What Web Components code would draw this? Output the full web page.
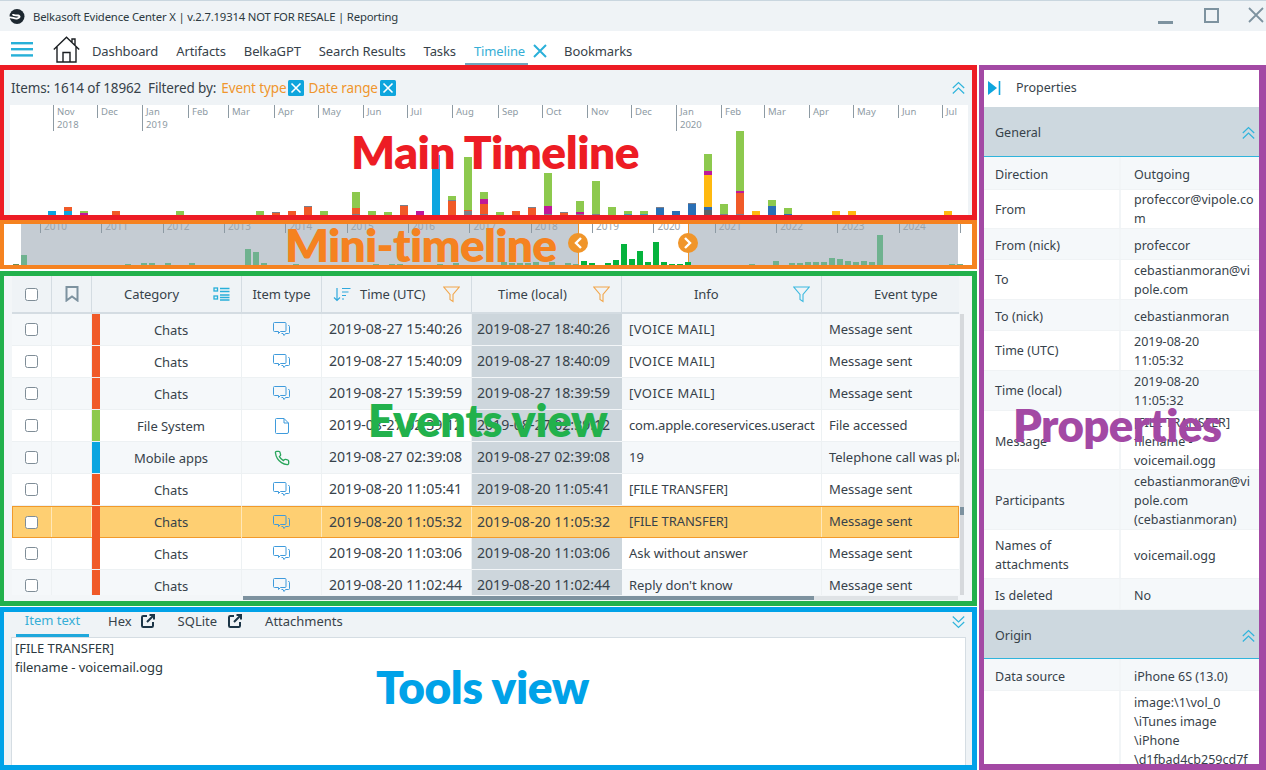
<!DOCTYPE html>
<html><head><meta charset="utf-8"><title>Belkasoft Evidence Center X</title>
<style>
html,body{margin:0;padding:0;background:#fff;height:770px;overflow:hidden}
body{font:13px "Noto Sans","Open Sans",sans-serif;color:#37424a}
</style></head><body>
<x-app></x-app>
<script>
const ICONS={
 chat:'<svg width="17" height="15" viewBox="0 0 17 15" fill="none" stroke="#3f9bdc"><path d="M1.5.5h10.5a1 1 0 0 1 1 1v7a1 1 0 0 1-1 1H7.5l-2 2v-2H1.500a1 1 0 0 1-1-1v-7a1 1 0 0 1 1-1z"/><path d="M15 3.500h.5a1 1 0 0 1 1 1v6a1 1 0 0 1-1 1h-3l-1.500 2-1-2H8.500"/></svg>',
 file:'<svg width="14" height="16" viewBox="0 0 14 16" fill="none" stroke="#3f9bdc"><path d="M1.500.5h7.500l4.500 4.500v9a1.500 1.500 0 0 1-1.500 1.500H1.500A1 1 0 0 1 .5 14.500v-13a1 1 0 0 1 1-1z"/><path d="M9 .5v4.500h4.500"/></svg>',
 phone:'<svg width="16" height="16" viewBox="0 0 24 24" fill="none" stroke="#2aa65c" stroke-width="2"><path d="M22 16.920v3a2 2 0 0 1-2.180 2 19.790 19.790 0 0 1-8.630-3.070 19.500 19.500 0 0 1-6-6 19.790 19.790 0 0 1-3.070-8.670A2 2 0 0 1 4.110 2h3a2 2 0 0 1 2 1.720 12.840 12.840 0 0 0 .7 2.810 2 2 0 0 1-.45 2.110L8.090 9.910a16 16 0 0 0 6 6l1.270-1.270a2 2 0 0 1 2.110-.45 12.840 12.840 0 0 0 2.810.7A2 2 0 0 1 22 16.920z"/></svg>',
 up:'<svg width="13" height="14" viewBox="0 0 13 14" fill="none" stroke="#2fb4dc" stroke-width="1.200"><path d="M.8 7 6.500 1.500 12.200 7M.8 12.500 6.500 7 12.200 12.500"/></svg>',
 down:'<svg width="13" height="14" viewBox="0 0 13 14" fill="none" stroke="#2fb4dc" stroke-width="1.200"><path d="M.8 1.500 6.500 7 12.200 1.500M.8 7 6.500 12.500 12.200 7"/></svg>',
 funnelO:'<svg width="17" height="17" viewBox="0 0 17 17" fill="none" stroke="#f2a64b" stroke-width="1.100"><path d="M.8 1h15.400L10 8.500v7l-3-2V8.500z"/></svg>',
 funnelB:'<svg width="17" height="17" viewBox="0 0 17 17" fill="none" stroke="#3cb9e0" stroke-width="1.100"><path d="M.8 1h15.400L10 8.500v7l-3-2V8.500z"/></svg>',
 bookmark:'<svg width="14" height="16" viewBox="0 0 14 16" fill="none" stroke="#7d929f" stroke-width="2"><path d="M1.500 1h11v13.500L7 10.500 1.500 14.500z"/></svg>',
 list:'<svg width="17" height="14" viewBox="0 0 17 14" fill="none" stroke="#27afd9" stroke-width="1.300"><rect x="1" y="1" width="3.500" height="3"/><rect x="1" y="9" width="3.500" height="3"/><path d="M7 1.500h9.500M7 4.500h9.500M7 8h9.500M7 10.500h9.500M7 13h9.500"/></svg>',
 sort:'<svg width="18" height="15" viewBox="0 0 18 15" fill="none" stroke="#2fa8dc" stroke-width="1.200"><path d="M4 1v12.500M1 10.500l3 3 3-3M9 1.500h8.500M9 5h6.500M9 8.500h4M9 12h2"/></svg>',
 ext:'<svg width="14" height="14" viewBox="0 0 14 14" fill="none" stroke="#1c3547" stroke-width="2"><path d="M6 2H2.200A1.200 1.200 0 0 0 1 3.200v8.600A1.200 1.200 0 0 0 2.200 13h8.600a1.200 1.200 0 0 0 1.200-1.200V8M6 8l7-7M8.500 1H13v4.500"/></svg>',
 xBlue:'<svg width="14" height="14" viewBox="0 0 14 14" fill="none" stroke="#2ab0d9" stroke-width="2"><path d="M1 1l12 12M13 1 1 13"/></svg>',
 chip:'<svg width="16" height="16" viewBox="0 0 16 16"><rect width="16" height="16" rx="1.500" fill="#0ea5dd"/><path d="M3.500 3.500l9 9M12.500 3.500l-9 9" stroke="#fff" stroke-width="1.600" fill="none"/></svg>',
 panel:'<svg width="13" height="14" viewBox="0 0 13 14"><path d="M0 0 9 7 0 14z" fill="#0ea5dd"/><path d="M11.500 0v14" stroke="#0ea5dd" stroke-width="1.600"/></svg>',
 logo:'<svg width="16" height="15" viewBox="0 0 16 15"><circle cx="8" cy="7.500" r="7.500" fill="#1d2830"/><path d="M0 8.500c3-1 5 1.500 8 1s3.500-2.500 1-3-5 .5-5-1.500" fill="none" stroke="#fff" stroke-width="1.800"/></svg>',
 home:'<svg width="27" height="27" viewBox="0 0 27 27" fill="none" stroke="#1b1f22" stroke-width="1.400"><path d="M.8 13.500 13.500 1.200 26.200 13.500M4 11v15h19V11M10 26V16.500h7V26M19 7V3h3v7"/></svg>',
 burger:'<svg width="22" height="15" viewBox="0 0 22 15" fill="#27b0d8"><rect width="22" height="2.400"/><rect y="6" width="22" height="2.400"/><rect y="12.200" width="22" height="2.400"/></svg>',
 min:'<svg width="15" height="3"><rect width="15" height="3" fill="#7d929f"/></svg>',
 max:'<svg width="15" height="15" fill="none" stroke="#7d929f" stroke-width="2"><rect x="1" y="1" width="13" height="13"/></svg>',
 close:'<svg width="16" height="16" fill="none" stroke="#7d929f" stroke-width="1.800"><path d="M1 1l14 14M15 1 1 15"/></svg>',
 left:'<svg width="10" height="12" viewBox="0 0 10 12" fill="none" stroke="#fff" stroke-width="2.400"><path d="M8 1 3 6l5 5"/></svg>',
 right:'<svg width="10" height="12" viewBox="0 0 10 12" fill="none" stroke="#fff" stroke-width="2.400"><path d="M2 1l5 5-5 5"/></svg>'
};
function define(name,css,render){
 customElements.define(name,class extends HTMLElement{
  constructor(){super();this.attachShadow({mode:'open'});}
  connectedCallback(){this.shadowRoot.innerHTML='<style>'+css+'</style>'+render(this);}
 });
}
define('x-icon',':host{display:inline-flex;flex:none;line-height:0}',el=>ICONS[el.getAttribute('name')]);
define('x-check',':host{display:block;flex:none;width:11px;height:11px;border:1px solid #7f8d97;border-radius:2.500px;background:#fff}',()=>'');

define('x-titlebar',`:host{display:flex;align-items:center;height:30px;background:#eff3f6;border-top:1px solid #c9d6df;padding-left:9px;font-size:11.300px;color:#2c3940;letter-spacing:-.17px}
 .t{margin-left:8px;flex:1;white-space:nowrap}
 .a{margin-right:31px;margin-top:12px}.b{margin-right:29px;margin-top:-2px}.d{margin-right:2px;margin-top:-2px}`,
 ()=>`<x-icon name="logo"></x-icon><span class="t">Belkasoft Evidence Center X | v.2.7.19314 NOT FOR RESALE | Reporting</span>
 <x-icon class="a" name="min"></x-icon><x-icon class="b" name="max"></x-icon><x-icon class="d" name="close"></x-icon>`);

define('x-navbar',`:host{display:flex;align-items:center;height:34px;background:#fff;padding-left:11px;font-size:13px;color:#37424a;letter-spacing:-.12px;box-sizing:border-box}
 .tabs{display:flex;align-self:stretch;align-items:center;margin-left:3px}
 .tab{padding:6px 9px 0;height:100%;display:flex;align-items:center;white-space:nowrap;box-sizing:border-box}
 .on{color:#35aed6;border-bottom:2px solid #6fa5bd;padding:8px 3px 0 9px}
 .x{margin:6px 8px 0 5px}
 .h{margin-left:20px;margin-top:3px}.bg{margin-top:3px}`,
 ()=>`<x-icon class="bg" name="burger"></x-icon><x-icon class="h" name="home"></x-icon><div class="tabs">
 ${['Dashboard','Artifacts','BelkaGPT','Search Results','Tasks'].map(t=>`<div class="tab">${t}</div>`).join('')}
 <div class="tab on">Timeline</div><x-icon class="x" name="xBlue"></x-icon><div class="tab">Bookmarks</div></div>`);

define('x-frame',`:host{display:block;position:relative;box-sizing:border-box;border-style:solid;border-color:var(--c);border-width:var(--bw,5px 5px 5px 4px)}
 .l{position:absolute;font:800 var(--fs,46px)/1 Lato,"Open Sans",sans-serif;letter-spacing:var(--ls,0);color:var(--c);white-space:nowrap;pointer-events:none;z-index:5}`,
 el=>`<slot></slot><div class="l" style="left:${el.getAttribute('lx')}px;top:${el.getAttribute('ly')}px">${el.getAttribute('label')}</div>`);

const MONTHS=[[53,'Nov','2018'],[97,'Dec'],[142,'Jan','2019'],[188,'Feb'],[228,'Mar'],[274,'Apr'],[318,'May'],[363,'Jun'],[407,'Jul'],[452,'Aug'],[498,'Sep'],[542,'Oct'],[587,'Nov'],[631,'Dec'],[676,'Jan','2020'],[721,'Feb'],[764,'Mar'],[809,'Apr'],[853,'May'],[898,'Jun'],[942,'Jul'],[968,'']];
const COL={g:'#8dc94e',r:'#f05a28',b:'#0ba5e0',p:'#c0189a',y:'#ffb90f',d:'#2a6fb5',s:'#7b7f8a',t:'#3aa8b8',k:'#5f6368'};
const BARS={48:'b5',64:'r4 b5',80:'g2 p2 s1',112:'r5',176:'g4 r1',256:'g5',272:'s1 r3',288:'r5',304:'s1 r9',320:'g5',352:'g16 r6 s2',368:'g5',384:'g3 r1',400:'s1 r9 s1',416:'p5',432:'b60 s1',448:'g4 s1 r15',464:'g53 r1 s5',480:'g7 p5 r10 s2',496:'g3 s1',512:'r5',528:'s1 r8',544:'g33 p8 s2',560:'s1 r3',576:'g11 p2 s2',592:'g33 s2',608:'g8 s1',624:'g3 t2',640:'g3 t2',656:'s1 d8',672:'d5',688:'s1 d11 s1',704:'g17 p4 y32 d3 k6',720:'g10 s2',736:'g60 p2 r21 s2',752:'y5',768:'g6 d9 s1',784:'g6 d2',832:'y5',848:'y5',944:'y5'};
define('x-main-timeline',`:host{display:flex;flex-direction:column;height:145px;background:#eff3f6;overflow:hidden}
 .bar{height:35px;flex:none;display:flex;align-items:center;padding-left:7px;font-size:13.500px;letter-spacing:-.12px;color:#37424a;white-space:pre}
 .o{color:#f0962d;margin-left:5px}.o+x-icon{margin-left:2px}.o.f{margin-left:4px}
 .up{margin-left:auto;margin-right:7px;}
 .chart{flex:1;margin:0 4px 0 6px;background:#fff;position:relative;display:flex;flex-direction:column;justify-content:space-between}
 .ticks{display:flex;padding-left:43px}
 .tick{font-size:9.500px;line-height:13px;color:#8d9aa3;flex:none;box-sizing:border-box}
 .tick span{display:block;border-left:1px solid #8d9aa3;padding-left:3px}
 .bars{display:flex;align-items:flex-end;padding-left:38px;margin-bottom:4px}
 .col{width:8px;margin-right:8px;flex:none;display:flex;flex-direction:column}
 .col i{display:block}`,
 ()=>{
  let ticks='';
  for(let i=0;i<MONTHS.length-1;i++){const m=MONTHS[i];ticks+=`<div class="tick" style="width:${MONTHS[i+1][0]-m[0]}px"><span>${m[1]}${m[2]?'<br>'+m[2]:''}</span></div>`;}
  let bars='';
  for(let x=48;x<=944;x+=16){const s=BARS[x];bars+='<div class="col">'+(s?s.split(' ').map(p=>`<i style="background:${COL[p[0]]};height:${p.slice(1)}px"></i>`).join(''):'')+'</div>';}
  return `<div class="bar"><span>Items: 1614 of 18962  Filtered by:</span><span class="o">Event type</span><x-icon name="chip"></x-icon><span class="o f">Date range</span><x-icon name="chip"></x-icon><x-icon class="up" name="up"></x-icon></div>
  <div class="chart"><div class="ticks">${ticks}</div><div class="bars">${bars}</div></div>`;
 });

const MINI={12:1,21:10,125:1,141:2,149:2,165:2,189:2,245:16,253:13,261:2,293:1,373:1,389:1,397:1,437:1,453:2,501:3,509:2,517:2,525:2,533:3,549:3,565:2,573:1,581:4,589:2,605:2,613:5,621:21,629:6,637:14,645:3,653:23,661:3,669:1,677:1,685:3,703:2,711:1,749:1,773:4,789:2,797:2,805:3,813:3,821:3,829:7,837:6,845:4,853:3,861:4,869:3,877:30,949:1,957:1};
define('x-mini-timeline',`:host{display:flex;flex-direction:column;justify-content:space-between;position:relative;height:41px;overflow:hidden;
  background:linear-gradient(to right,#fff 17px,#c5ccd3 17px,#c5ccd3 574px,#f0952a 574px,#f0952a 575px,#fff 575px,#fff 684px,#f0952a 684px,#f0952a 685px,#c5ccd3 685px,#c5ccd3 954px,#fff 954px)}
 .ticks{display:flex;padding-left:36px;margin-top:-4px}
 .tick{flex:none;width:61.350px;box-sizing:border-box;font-size:10px;line-height:13px;color:#9aa5ad;border-left:1px solid #8d9aa3;padding-left:3px}
 .bars{display:flex;align-items:flex-end;padding-left:9px}
 .b{flex:none;width:6px;margin-right:2px}
 .h{position:absolute;top:9px;width:20px;height:20px;border-radius:50%;background:#f0952a;display:flex;align-items:center;justify-content:center;z-index:6}`,
 ()=>{
  let t='';for(let y=2010;y<=2025;y++)t+=`<div class="tick">${y<2025?y:''}</div>`;
  let b='';for(let x=13;x<=957;x+=8){const k=x==13?12:x;const h=MINI[k]||0;const c=(x>=579&&x<688)?'#05b33d':(x<21?'#6f8f55':'#6fb28f');b+=`<div class="b" style="height:${h}px;background:${c}"></div>`;}
  return `<div class="ticks">${t}</div><div class="bars">${b}</div><div class="h" style="left:564px"><x-icon name="left"></x-icon></div><div class="h" style="left:674px"><x-icon name="right"></x-icon></div>`;
 });

const R=[['r','Chats','chat','2019-08-27 15:40:26','2019-08-27 18:40:26','[VOICE MAIL]','Message sent'],
['r','Chats','chat','2019-08-27 15:40:09','2019-08-27 18:40:09','[VOICE MAIL]','Message sent'],
['r','Chats','chat','2019-08-27 15:39:59','2019-08-27 18:39:59','[VOICE MAIL]','Message sent'],
['g','File System','file','2019-08-27 02:39:12','2019-08-27 02:39:12','com.apple.coreservices.useract','File accessed'],
['b','Mobile apps','phone','2019-08-27 02:39:08','2019-08-27 02:39:08','19','Telephone call was placed'],
['r','Chats','chat','2019-08-20 11:05:41','2019-08-20 11:05:41','[FILE TRANSFER]','Message sent'],
['r','Chats','chat','2019-08-20 11:05:32','2019-08-20 11:05:32','[FILE TRANSFER]','Message sent'],
['r','Chats','chat','2019-08-20 11:03:06','2019-08-20 11:03:06','Ask without answer','Message sent'],
['r','Chats','chat','2019-08-20 11:02:44','2019-08-20 11:02:44',"Reply don't know",'Message sent']];
const infoStyle=s=>s.startsWith('[VOICE')?' style="letter-spacing:.45px"':s.startsWith('com.')?' style="letter-spacing:-.18px"':'';
define('x-events',`:host{display:block;height:325px;background:#f3f6f8;position:relative;overflow:hidden;padding-left:8px;font-size:13px;letter-spacing:-.05px;color:#37424a}
 .wrap{width:947px;height:319px;overflow:hidden}
 .r{display:grid;grid-template-columns:40px 40px 150px 80px 150px 150px 200px 137px;height:32px;box-sizing:border-box;background:#fff}
 .r:nth-child(even){background:#f5f8fa}
 .c{display:flex;align-items:center;min-width:0;white-space:nowrap;overflow:hidden;box-sizing:border-box;border-right:1px solid #edf1f3;border-bottom:1px solid #edf1f3}
 .hd{height:38px;background:#eff3f6!important}
 .hd .c{border-right:1px solid #d4dce2;border-bottom:2px solid #d4dce2;justify-content:center;color:#37424a}
 .ctr{justify-content:center}.p{padding:0 0 2px 7px}
 .tm{font-size:14.100px;letter-spacing:0}
 .cat{position:relative;padding-left:9px}
 .cat i{position:absolute;left:0;top:0;bottom:-1px;width:8px}
 .loc{background:#cdd6dc;border-bottom:1px solid #f3f6f8;padding:0 0 2px 5px;border-right:none}
 .sel{background:#fecf72!important;outline:1px solid #f19a2b;outline-offset:-1px;position:relative}
 .sel .c{border-color:#ffe7b8;border-bottom:none;background:transparent}
 .vs{position:absolute;left:956px;top:38px;width:4px;height:281px;background:#d6d9dc}
 .vs i{display:block;position:absolute;top:193px;left:0;width:4px;height:8px;background:#7d929f}
 .hs{position:absolute;left:239px;top:320px;width:715px;height:4px;background:#dfe3e6}
 .hs i{display:block;width:571px;height:4px;background:#7d929f}
 .hspace{flex:1}`,
 ()=>{
  const hd=`<div class="r hd"><div class="c"><x-check></x-check></div><div class="c"><x-icon name="bookmark"></x-icon></div>
  <div class="c" style="justify-content:flex-start;padding-left:32px">Category<span class="hspace"></span><x-icon name="list" style="margin-right:11px"></x-icon></div>
  <div class="c">Item type</div>
  <div class="c" style="justify-content:flex-start;padding-left:11px"><x-icon name="sort"></x-icon><span style="margin-left:9px">Time (UTC)</span><span class="hspace"></span><x-icon name="funnelO" style="margin-right:11px"></x-icon></div>
  <div class="c" style="justify-content:flex-start;padding-left:26px">Time (local)<span class="hspace"></span><x-icon name="funnelO" style="margin-right:11px"></x-icon></div>
  <div class="c" style="justify-content:flex-start;padding-left:72px">Info<span class="hspace"></span><x-icon name="funnelB" style="margin-right:11px"></x-icon></div>
  <div class="c" style="justify-content:flex-start;padding-left:52px;border-right:none">Event type</div></div>`;
  const rows=R.map((r,i)=>`<div class="r${i==6?' sel':''}"><div class="c ctr"><x-check></x-check></div><div class="c"></div>
   <div class="c ctr cat"><i style="background:${COL[r[0]]}"></i>${r[1]}</div>
   <div class="c ctr"><x-icon name="${r[2]}"></x-icon></div><div class="c p tm">${r[3]}</div><div class="c loc tm">${r[4]}</div><div class="c p"${infoStyle(r[5])}>${r[5]}</div><div class="c p" style="border-right:none">${r[6]}</div></div>`).join('');
  return `<div class="wrap">${hd}${rows}</div><div class="vs"><i></i></div><div class="hs"><i></i></div>`;
 });

define('x-tools',`:host{display:flex;flex-direction:column;height:153px;background:#eff3f6;font-size:13px;color:#37424a;overflow:hidden}
 .tabs{display:flex;align-items:stretch;height:25px;flex:none;box-sizing:border-box}
 .t{display:flex;align-items:center;height:25px;box-sizing:border-box;white-space:nowrap;padding-bottom:8px}
 .on{color:#35aed6;border-bottom:3px solid #1fa8dc;padding-bottom:6px;margin-left:12px;width:73px;justify-content:center}
 .box{flex:1;margin:0 6px 0 7px;background:#fff;border:1px solid #d5dde3;border-bottom:none;padding:1px 3px;line-height:19px;color:#2c3940;letter-spacing:-.05px}
 .dn{margin:3px 7px 0 auto}`,
 ()=>`<div class="tabs"><div class="t on">Item text</div><div class="t" style="margin-left:19px">Hex<x-icon name="ext" style="margin-left:9px"></x-icon></div><div class="t" style="margin-left:23px">SQLite<x-icon name="ext" style="margin-left:11px"></x-icon></div><div class="t" style="margin-left:23px">Attachments</div><x-icon class="dn" name="down"></x-icon></div>
 <div class="box">[FILE TRANSFER]<br>filename - voicemail.ogg</div>`);

const P=[[33,'Direction','Outgoing',2],[39,'From','profeccor@vipole.co<br>m',0],[31,'From (nick)','profeccor',2],[40,'To','cebastianmoran@vi<br>pole.com',0],[31,'To (nick)','cebastianmoran',2],[40,'Time (UTC)','2019-08-20<br>11:05:32',0],[40,'Time (local)','2019-08-20<br>11:05:32',0],[59,'Message','[FILE TRANSFER]<br>filename -<br>voicemail.ogg',2],[60,'Participants','cebastianmoran@vi<br>pole.com<br>(cebastianmoran)',2],[49,'Names of<br>attachments','voicemail.ogg',2],[31,'Is deleted','No',2]];
const rowHtml=a=>`<div class="r" style="height:${a[0]}px;--pt:${a[3]}px"><div class="k">${a[1]}</div><div class="v">${a[2]}</div></div>`;
define('x-properties',`:host{display:block;height:694px;background:#fff;overflow:hidden;font-size:12.500px;letter-spacing:0;color:#37424a;line-height:19px}
 .top{display:flex;align-items:center;height:37px;padding:0 0 2px 4px;box-sizing:border-box}
 .top span{margin-left:15px}
 .s{display:flex;align-items:center;height:50px;box-sizing:border-box;background:#cdd8df;border-bottom:1px solid #2fb4dc;padding:2px 4px 0 11px;justify-content:space-between}
 .s.o{height:49px;padding-top:3px}
 .r{display:grid;grid-template-columns:135px 1fr;box-sizing:border-box;border-bottom:1px solid #f0f3f5}
 .wrap .r:nth-child(odd){background:#f5f8fa}
 .k{padding:var(--pt) 0 0 11px;white-space:nowrap;align-self:center}
 .v{border-left:2px solid #f2f5f7;padding:var(--pt) 0 0 13px;white-space:nowrap;display:flex;align-items:center}
 .last{height:90px;display:grid;grid-template-columns:135px 1fr;overflow:hidden}
 .last .v{align-items:flex-start;padding:2px 0 0 13px}`,
 ()=>`<div class="top"><x-icon name="panel"></x-icon><span>Properties</span></div>
 <div class="s">General<x-icon name="up"></x-icon></div><div class="wrap">${P.map(rowHtml).join('')}</div>
 <div class="s o">Origin<x-icon name="up"></x-icon></div><div class="wrap">${rowHtml([32,'Data source','iPhone 6S (13.0)',3])}</div>
 <div class="last"><div></div><div class="v"><div>image:\\1\\vol_0<br>\\iTunes image<br>\\iPhone<br>\\d1fbad4cb259cd7f</div></div></div>`);

define('x-app',`:host{display:grid;grid-template-rows:31px 34px 705px;grid-template-columns:977px 2px 287px;width:1266px;height:770px}
 x-titlebar,x-navbar{grid-column:1/-1}
 .left{display:flex;flex-direction:column}`,
 ()=>`<x-titlebar></x-titlebar><x-navbar></x-navbar>
 <div class="left">
  <x-frame style="--c:#ed1c24;height:155px;--ls:-.5px" label="Main Timeline" lx="347" ly="59"><x-main-timeline></x-main-timeline></x-frame>
  <x-frame style="--c:#f58220;--bw:4px 5px 4px 4px;height:49px;--ls:-.75px" label="Mini-timeline" lx="281" ly="-2"><x-mini-timeline></x-mini-timeline></x-frame>
  <x-frame style="--c:#22b14c;height:335px;margin-top:2px;--fs:45px;--ls:-.2px" label="Events view" lx="364" ly="122"><x-events></x-events></x-frame>
  <x-frame style="--c:#00a2e8;height:163px;margin-top:1px;--ls:-.4px" label="Tools view" lx="372" ly="52"><x-tools></x-tools></x-frame>
 </div><div></div>
 <x-frame style="--c:#a349a4;--bw:5px 7px 6px 5px;--fs:45.500px;height:705px;--ls:-.6px" label="Properties" lx="29" ly="332"><x-properties></x-properties></x-frame>`);
</script>
</body></html>
